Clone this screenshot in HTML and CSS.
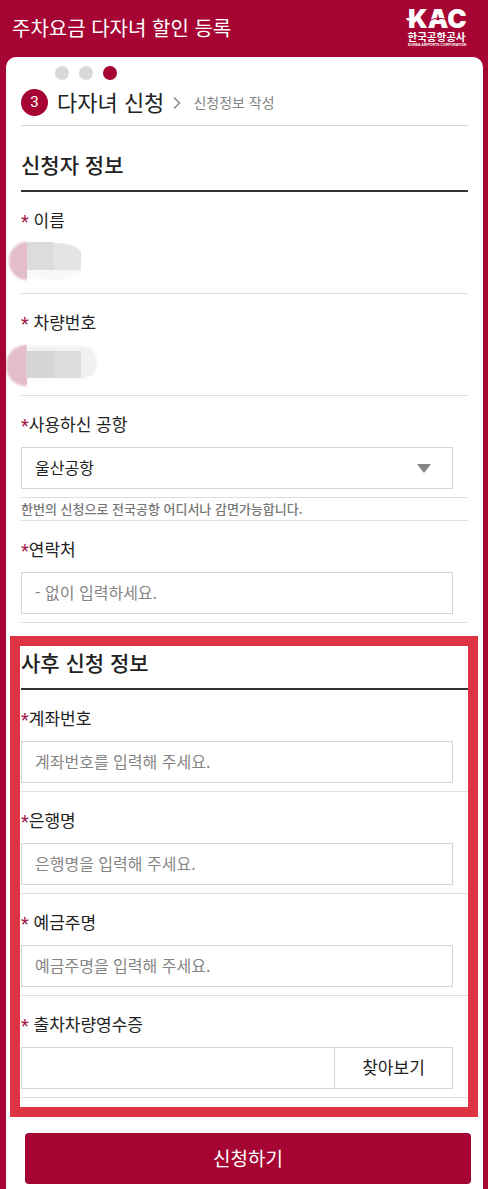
FILE: index.html
```html
<!DOCTYPE html>
<html lang="ko">
<head>
<meta charset="utf-8">
<meta name="viewport" content="width=device-width, initial-scale=1">
<title>주차요금 다자녀 할인 등록</title>
<link rel="stylesheet" href="styles.css">
</head>
<body>
<header class="topbar">
  <h1 class="topbar-title">주차요금 다자녀 할인 등록</h1>
  <svg class="logo" width="62" height="40" viewBox="0 0 124 80" role="img" aria-label="KAC 한국공항공사">
    <text class="logo-mark" x="4" y="40">KAC</text>
    <path class="logo-wing" d="M0 20 H16 V25 H2 Z"/>
    <path class="logo-cut" d="M44 27 Q60 16 84 24"/>
    <text class="logo-ko" x="3" y="66">한국공항공사</text>
    <text class="logo-en" x="4" y="76">KOREA AIRPORTS CORPORATION</text>
  </svg>
</header>

<main class="card">
  <div class="dots"><span class="dot"></span><span class="dot"></span><span class="dot dot-on"></span></div>
  <div class="step">
    <span class="step-no">3</span>
    <strong class="step-name">다자녀 신청</strong>
    <svg class="chevron" width="8" height="14" viewBox="0 0 8 14" aria-hidden="true"><path d="M1 1.500 L6.500 7 L1 12.500"/></svg>
    <span class="step-sub">신청정보 작성</span>
  </div>

  <form>
    <section class="applicant">
      <h2 class="section-title">신청자 정보</h2>
      <div class="row">
        <div class="label"><span class="req">*</span> 이름</div>
        <svg class="masked" width="110" height="50" viewBox="0 0 110 50" aria-hidden="true">
          <defs>
            <filter id="soft" x="-10%" y="-10%" width="120%" height="120%"><feGaussianBlur stdDeviation="1.200"/></filter>
            <clipPath id="left"><rect x="0" y="0" width="21" height="50"/></clipPath>
            <clipPath id="right"><rect x="21" y="0" width="54" height="50"/></clipPath>
          </defs>
          <g clip-path="url(#left)"><rect x="3" y="7" width="66" height="38" rx="18" fill="#e4bdca" filter="url(#soft)"/></g>
          <g clip-path="url(#right)">
            <path d="M8 7 H46 Q70 7 76 18 V38 Q62 45 48 45 L8 42 Z" fill="#f8f8f8" filter="url(#soft)"/>
            <path d="M8 7 H48 V35 H8 Z" fill="#dcdcdc"/>
            <path d="M48 8 Q68 8 75 17 V35 H48 Z" fill="#e5e5e5"/>
          </g>
        </svg>
      </div>
      <div class="row">
        <div class="label"><span class="req">*</span> 차량번호</div>
        <svg class="masked" width="110" height="50" viewBox="0 0 110 50" aria-hidden="true">
          <g clip-path="url(#left)"><rect x="0" y="8" width="66" height="41" rx="20" fill="#e4bdca" filter="url(#soft)"/></g>
          <path d="M21 9 H76 Q91 10 91 26 Q91 40 78 41 H21 Z" fill="#f1f1f1" filter="url(#soft)"/>
          <rect x="21" y="14" width="27" height="27" fill="#d5d5d5"/>
          <rect x="48" y="14" width="27" height="27" fill="#dcdcdc"/>
        </svg>
      </div>
      <div class="row">
        <label class="label" for="airport"><span class="req">*</span>사용하신 공항</label>
        <div class="select-wrap">
          <select class="field" id="airport"><option>울산공항</option></select>
          <svg class="caret" width="14" height="10" viewBox="0 0 14 10" aria-hidden="true"><path d="M0 0 H14 L7 9 Z"/></svg>
        </div>
      </div>
      <p class="hint">한번의 신청으로 전국공항 어디서나 감면가능합니다.</p>
      <div class="row">
        <label class="label" for="phone"><span class="req">*</span>연락처</label>
        <input class="field" id="phone" type="tel" placeholder="- 없이 입력하세요.">
      </div>
    </section>

    <section class="highlight">
      <h2 class="section-title">사후 신청 정보</h2>
      <div class="row">
        <label class="label" for="account"><span class="req">*</span>계좌번호</label>
        <input class="field" id="account" type="text" placeholder="계좌번호를 입력해 주세요.">
      </div>
      <div class="row">
        <label class="label" for="bank"><span class="req">*</span>은행명</label>
        <input class="field" id="bank" type="text" placeholder="은행명을 입력해 주세요.">
      </div>
      <div class="row">
        <label class="label" for="holder"><span class="req">*</span> 예금주명</label>
        <input class="field" id="holder" type="text" placeholder="예금주명을 입력해 주세요.">
      </div>
      <div class="row">
        <label class="label" for="receipt"><span class="req">*</span> 출차차량영수증</label>
        <div class="file">
          <input class="field file-name" id="receipt" type="text" readonly>
          <button class="browse" type="button">찾아보기</button>
        </div>
      </div>
    </section>

    <button class="submit" type="submit">신청하기</button>
  </form>
</main>
</body>
</html>
```
FILE: styles.css
```css
* { box-sizing: border-box; }

body {
  margin: 0;
  background: #a60534;
  color: #222;
  font-family: "Noto Sans CJK KR", sans-serif;
  font-size: 17px;
}

h1, h2, p { margin: 0; }

input, select, button { font-family: inherit; }

.topbar {
  display: flex;
  justify-content: space-between;
  align-items: center;
  height: 57px;
  padding: 0 20px 2px 12px;
}

.topbar-title {
  color: #fff;
  font-size: 20px;
  font-weight: 400;
  line-height: 30px;
}

.logo {
  fill: #fff;
  overflow: visible;
}

.logo-mark { font: 900 52px Inter, sans-serif; }
.logo-cut { fill: none; stroke: #a60534; stroke-width: 2; }
.logo-ko { font-size: 21px; font-weight: 700; }
.logo-en { font: 700 7px "Liberation Sans", sans-serif; }

.card {
  margin: 0 5px 0 6px;
  padding: 9px 15px 5px;
  background: #fff;
  border-radius: 10px 10px 0 0;
}

.dots {
  display: flex;
  gap: 10px;
  padding-left: 34px;
}

.dot {
  width: 14px;
  height: 14px;
  border-radius: 50%;
  background: #d7d8da;
}

.dot-on { background: #a60534; }

.step {
  display: flex;
  align-items: center;
  height: 46px;
  border-bottom: 1px solid #d4d4d4;
}

.step-no {
  width: 27px;
  height: 27px;
  margin-right: 9px;
  border-radius: 50%;
  background: #a60534;
  color: #fff;
  font-family: Roboto, sans-serif;
  font-size: 15px;
  line-height: 27px;
  text-align: center;
}

.step-name {
  padding-bottom: 4px;
  font-size: 22px;
  font-weight: 400;
  line-height: 28px;
}

.chevron {
  margin: 0 12px 0 9px;
  fill: none;
  stroke: #888;
  stroke-width: 1.5;
}

.step-sub {
  padding-bottom: 2px;
  color: #858585;
  font-size: 14px;
}

.applicant { padding: 22px 0 13px; }

.section-title {
  padding-bottom: 9px;
  border-bottom: 2px solid #333;
  font-size: 21px;
  font-weight: 500;
  line-height: 33px;
}

.row {
  display: flex;
  flex-direction: column;
  gap: 10px;
  padding: 15px 0 8px;
  border-bottom: 1px solid #dcdedf;
}

.label { line-height: 26px; }

.req {
  color: #a0204a;
  font-family: Roboto, sans-serif;
  font-size: 18px;
  line-height: 1;
  vertical-align: -1px;
}

.masked {
  margin: -8px 0 0 -15px;
}

.field {
  width: calc(100% - 15px);
  height: 42px;
  padding: 0 13px 2px;
  border: 1px solid #d5d5d5;
  border-radius: 0;
  background: #fff;
  color: #222;
  font-size: 16px;
}

.field::placeholder { color: #858585; opacity: 1; }

.select-wrap {
  position: relative;
  display: flex;
}

select.field { appearance: none; }

.caret {
  position: absolute;
  top: 17px;
  right: 37px;
  fill: #858585;
  pointer-events: none;
}

.hint {
  border-bottom: 1px solid #dcdedf;
  color: #777;
  font-size: 13px;
  font-weight: 500;
  line-height: 22px;
}

.highlight {
  margin: 0 -10px 0 -11px;
  padding: 0 0 9px 1px;
  border: 10px solid #dc3440;
}

.file {
  display: flex;
  margin-right: 15px;
}

.file-name {
  flex: 1;
  min-width: 0;
  border-right: 0;
}

.browse {
  width: 119px;
  padding-bottom: 4px;
  border: 1px solid #d5d5d5;
  background: #fff;
  color: #222;
  font-size: 17px;
}

.submit {
  display: block;
  width: calc(100% - 1px);
  height: 51px;
  margin-top: 16px;
  margin-left: 4px;
  padding-bottom: 3px;
  border: 0;
  border-radius: 4px;
  background: #a60534;
  color: #fff;
  font-size: 19px;
}
```
